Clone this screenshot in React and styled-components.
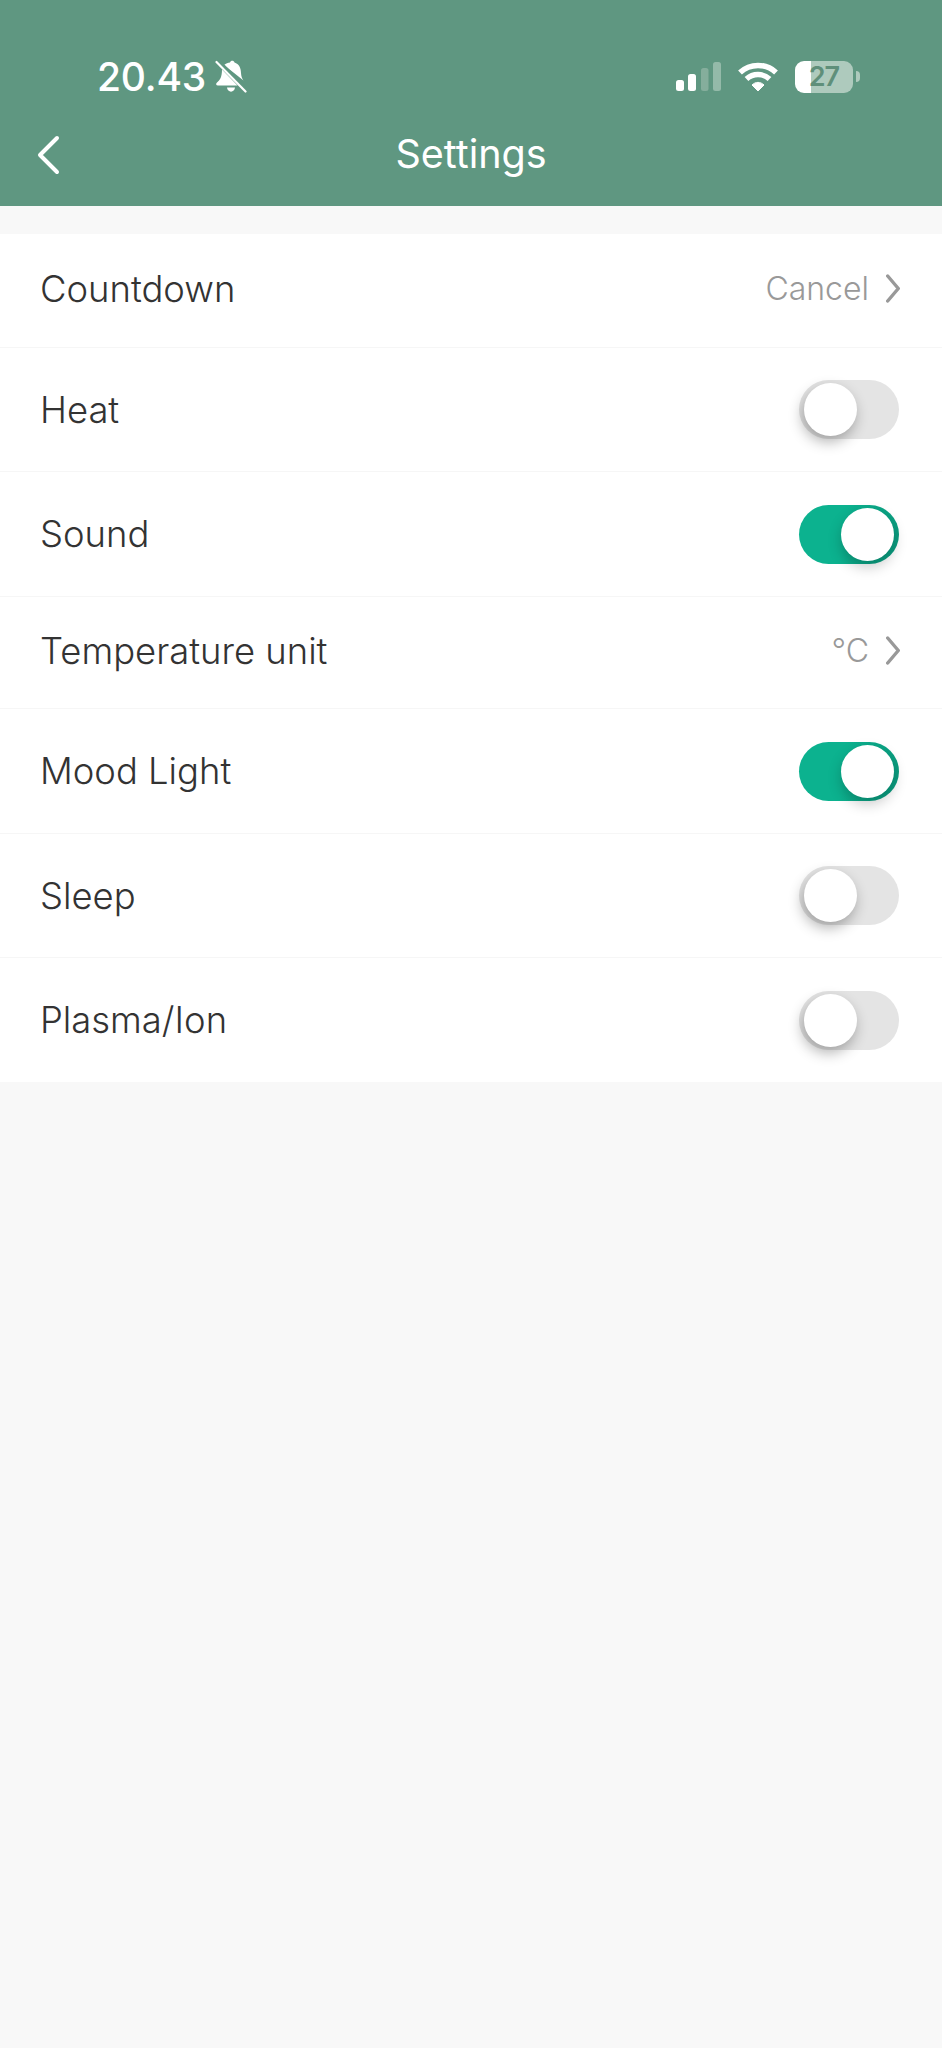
import styled, { createGlobalStyle } from "styled-components";

const GlobalStyle = createGlobalStyle`
  html, body {
    margin: 0;
    padding: 0;
    background: #f8f8f8;
  }
  body {
    font-family: Inter, "Liberation Sans", sans-serif;
  }
`;

const Page = styled.div`
  width: 942px;
  height: 2048px;
  background: #f8f8f8;
  overflow: hidden;
`;

const Header = styled.header`
  height: 206px;
  background: #5f9781;
  color: #fff;
  display: flex;
  flex-direction: column;
`;

const StatusBar = styled.div`
  height: 60px;
  margin-top: 46px;
  padding: 0 82px 0 97px;
  display: flex;
  align-items: center;
  justify-content: space-between;
`;

const TimeGroup = styled.div`
  display: flex;
  align-items: center;
  gap: 9px;
`;

const Time = styled.span`
  font-size: 39px;
  font-weight: 500;
  letter-spacing: -0.2px;
`;

const StatusIcons = styled.div`
  display: flex;
  align-items: center;
  gap: 17px;
  margin-top: 1px;
`;

const Battery = styled.div`
  width: 58px;
  height: 32px;
  border-radius: 9px;
  background: linear-gradient(90deg, #fff 16px, #aecabd 16px);
  display: flex;
  align-items: center;
  justify-content: center;
  color: #5f8f7a;
  font-size: 27px;
  line-height: 32px;
  font-weight: 600;
  letter-spacing: -1px;
`;

const BatteryWrap = styled.div`
  display: flex;
  align-items: center;
  gap: 3px;
`;

const BatteryCap = styled.div`
  width: 4px;
  height: 11px;
  border-radius: 0 4px 4px 0;
  background: #aecabd;
`;

const NavBar = styled.div`
  flex: 1;
  display: flex;
  align-items: flex-start;
  justify-content: center;
  position: relative;
`;

const BackButton = styled.div`
  position: absolute;
  left: 36px;
  top: 28px;
  display: flex;
`;

const Title = styled.h1`
  margin: 24px 0 0;
  font-size: 39.5px;
  line-height: 48px;
  font-weight: 400;
`;

const List = styled.div`
  margin-top: 28px;
  background: #fff;
`;

const Row = styled.div`
  height: ${(p) => p.$height}px;
  box-sizing: border-box;
  padding: 0 43px ${(p) => (p.$detail ? "4px" : "0")} 40px;
  display: flex;
  align-items: center;
  justify-content: space-between;
  border-bottom: ${(p) => (p.$last ? "none" : "1px solid #f6f6f6")};
`;

const Label = styled.span`
  font-size: 36.4px;
  font-weight: 350;
  color: #333;
`;

const Detail = styled.div`
  display: flex;
  align-items: center;
  gap: 17px;
  color: #999;
  font-size: 32px;
  font-weight: 350;
  margin-right: -1px;
`;

const Track = styled.div`
  position: relative;
  width: 100px;
  height: 59px;
  border-radius: 30px;
  background: ${(p) =>
    p.$on ? "linear-gradient(100deg, #0cb28f 45%, #0a9a7d 100%)" : "#e4e4e4"};
`;

const Knob = styled.div`
  position: absolute;
  top: 3px;
  left: ${(p) => (p.$on ? "42px" : "5px")};
  width: 53px;
  height: 53px;
  border-radius: 50%;
  background: #fff;
  box-shadow: ${(p) =>
    p.$on
      ? "0 6px 14px rgba(0, 0, 0, 0.22)"
      : "-2px 6px 14px rgba(0, 0, 0, 0.3)"};
`;

const Chevron = () => (
  <svg width="14" height="29" viewBox="0 0 14 29" fill="none">
    <path d="M1.7 2 L12.3 14.5 L1.7 27" stroke="#999" strokeWidth="3.4" strokeLinecap="round" strokeLinejoin="round" />
  </svg>
);

const BellOff = () => (
  <svg width="32" height="33" viewBox="0 0 32 33">
    <path
      d="M9 5 C11 3.5 13 3 15 2.6 C15.5 0 19 0 19.5 2.6 C24 4 25.8 8 26 13 C26.2 16.5 27 18.5 28.5 20.5 Z"
      fill="#fff"
    />
    <path
      d="M7 9.5 L22.5 25.5 L3 25.5 C1 25.5 0.5 23.5 2 22.5 C5 20 7 17 7 9.5 Z"
      fill="#fff"
    />
    <path d="M12 27.5 L20 27.5 C19.5 33 12.5 33 12 27.5 Z" fill="#fff" />
    <path d="M3 0.5 L32 30.5" stroke="#5f9781" strokeWidth="3.6" />
    <path d="M1.5 2 L30.5 31.5" stroke="#fff" strokeWidth="2.2" strokeLinecap="round" />
  </svg>
);

const Signal = () => (
  <svg width="45" height="30" viewBox="0 0 45 30">
    <rect x="0" y="18" width="8" height="11" rx="2.5" fill="#fff" />
    <rect x="12" y="12" width="8" height="17" rx="2.5" fill="#fff" />
    <rect x="25" y="6" width="7.5" height="23" rx="2.5" fill="#85ae9c" />
    <rect x="37" y="0" width="8" height="29" rx="2.5" fill="#94baa9" />
  </svg>
);

const Wifi = () => (
  <svg width="40" height="30" viewBox="0 0 40 30" fill="none" stroke="#fff" strokeWidth="5.5">
    <path d="M2 10.5 C12 1 28 1 38 10.5" />
    <path d="M8.5 17 C15 11 25 11 31.5 17" />
    <path d="M14 23 L20 29 L26 23 C22.5 19.5 17.5 19.5 14 23 Z" fill="#fff" strokeWidth="1" />
  </svg>
);

const BackIcon = () => (
  <svg width="24" height="42" viewBox="0 0 24 42" fill="none">
    <path d="M21 4 L4 21 L21 38" stroke="#fff" strokeWidth="4" strokeLinecap="round" strokeLinejoin="round" />
  </svg>
);

const rows = [
  { label: "Countdown", height: 114, detail: "Cancel" },
  { label: "Heat", height: 124, on: false },
  { label: "Sound", height: 125, on: true },
  { label: "Temperature unit", height: 112, detail: "°C" },
  { label: "Mood Light", height: 125, on: true },
  { label: "Sleep", height: 124, on: false },
  { label: "Plasma/Ion", height: 124, on: false },
];

const App = () => {
  return (
    <Page>
      <GlobalStyle />
      <Header>
        <StatusBar>
          <TimeGroup>
            <Time>20.43</Time>
            <BellOff />
          </TimeGroup>
          <StatusIcons>
            <Signal />
            <Wifi />
            <BatteryWrap>
              <Battery>27</Battery>
              <BatteryCap />
            </BatteryWrap>
          </StatusIcons>
        </StatusBar>
        <NavBar>
          <BackButton>
            <BackIcon />
          </BackButton>
          <Title>Settings</Title>
        </NavBar>
      </Header>
      <List>
        {rows.map((row, i) => (
          <Row
            key={row.label}
            $height={row.height}
            $detail={Boolean(row.detail)}
            $last={i === rows.length - 1}
          >
            <Label>{row.label}</Label>
            {row.detail ? (
              <Detail>
                {row.detail}
                <Chevron />
              </Detail>
            ) : (
              <Track $on={row.on}>
                <Knob $on={row.on} />
              </Track>
            )}
          </Row>
        ))}
      </List>
    </Page>
  );
};

export default App;
